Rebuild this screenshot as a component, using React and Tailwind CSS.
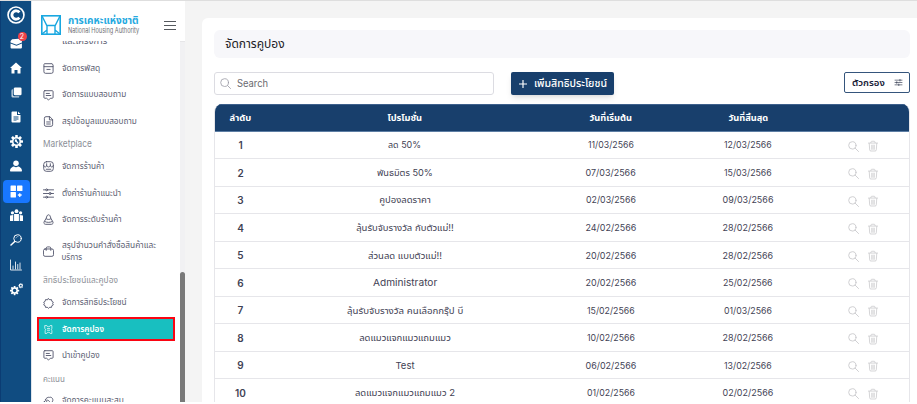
import { useLayoutEffect, useRef } from "react";

// Keeps a label at a fixed width whichever fallback font is in use.
function Fit({ w, className = "", center = false, children }) {
  const ref = useRef(null);
  useLayoutEffect(() => {
    const apply = () => {
      const el = ref.current;
      if (el) el.style.transform = `scaleX(${w / el.offsetWidth})`;
    };
    apply();
    document.fonts.ready.then(apply);
  }, [w]);
  return (
    <span style={{ width: w }} className={"flex shrink-0 " + (center ? "justify-center" : "justify-start")}>
      <span ref={ref} className={"inline-block shrink-0 whitespace-nowrap " + (center ? "origin-center " : "origin-left ") + className}>
        {children}
      </span>
    </span>
  );
}

function Line({ children, className = "size-[11px]", sw = 1.9 }) {
  return (
    <svg viewBox="0 0 24 24" className={"shrink-0 " + className} fill="none" stroke="currentColor" strokeWidth={sw} strokeLinecap="round" strokeLinejoin="round">
      {children}
    </svg>
  );
}
function Solid({ children, className = "size-3" }) {
  return (
    <svg viewBox="0 0 24 24" className={"shrink-0 " + className} fill="currentColor">
      {children}
    </svg>
  );
}

const Gear = ({ cx, cy, r, hole, color = "#104c81" }) => (
  <g>
    {[0, 45, 90, 135].map((a) => (
      <rect key={a} x={cx - r * 0.2} y={cy - r} width={r * 0.4} height={r * 2} rx={r * 0.08} transform={`rotate(${a} ${cx} ${cy})`} />
    ))}
    <circle cx={cx} cy={cy} r={r * 0.7} />
    <circle cx={cx} cy={cy} r={hole} fill={color} />
  </g>
);

const BoxI = () => <Line><path d="M4 1.500h16l2 3V8H2V4.500zM2 8v11a3.500 3.500 0 0 0 3.500 3.500h13A3.500 3.500 0 0 0 22 19V8M8.500 14h7" /></Line>;
const ChatI = () => <Line><path d="M4 1.500h16a2 2 0 0 1 2 2V16a2 2 0 0 1-2 2h-4l-4 4-4-4H4a2 2 0 0 1-2-2V3.500a2 2 0 0 1 2-2zM7 7.500h7M7 12h10" /></Line>;
const DocI = () => <Line><path d="M14 1.500H6.500A3.500 3.500 0 0 0 3 5v14a3.500 3.500 0 0 0 3.500 3.500h11A3.500 3.500 0 0 0 21 19V8.500zM14 1.500v7h7M8 13h8M8 17.500h8" /></Line>;
const ShopI = () => <Line><rect x="1.500" y="1.500" width="21" height="21" rx="6" /><path d="M1.500 10c1 4 6 4 6.500 0 1 4 7 4 8 0 .5 4 5.500 4 6.500 0M8 10V6M16 10V6M7 18h10" /></Line>;
const SlidersI = () => <Line><path d="M1 4h5M10 4h13M1 12h12M18 12h5M1 20h5M10 20h13" /><circle cx="8" cy="4" r="2" /><circle cx="15.500" cy="12" r="2.300" /><circle cx="8" cy="20" r="2" /></Line>;
const RankI = () => <Line><path d="M9 3.500c1-2.500 5-2.500 6 0l2.500 6.500 4 7c1.500 3-.5 5.500-3 5.500h-13c-2.500 0-4.500-2.500-3-5.500l4-7zM7 10.500c2 2 8 2 10 0M4 16.500c4 2.500 12 2.500 16 0" /></Line>;
const BagI = () => <Line><rect x="1" y="6.500" width="22" height="16" rx="3.500" /><path d="M7 9.500V5a3 3 0 0 1 3-3h4a3 3 0 0 1 3 3v4.500" /></Line>;
const BadgeI = () => <Line><path d="M12 1.500l2.800 2.300 3.700-.3.800 3.700 3.200 2L21 12l1.500 3-3.200 1.800-.8 3.700-3.700-.3L12 22.500l-2.800-2.300-3.700.3-.8-3.700L1.500 15 3 12 1.500 9.200l3.200-2 .8-3.700 3.700.3z" /></Line>;
const CouponI = () => <Line className="h-[11px] w-[9px]"><path d="M3 1.500h4.500c0 4 9 4 9 0H21V10c-2 1-2 3 0 4v8.500h-4.500c0-4-9-4-9 0H3V14c2-1 2-3 0-4zM9 9.500h6M9 14h6" /></Line>;
const ScoreI = () => <Line><path d="M5 8c2-4 6-6 9-5 5-2 9 4 7 8-1 3-4 4-4 8M3 12c3-4 9-4 11 0 1 4-2 7-6 7s-7-3-5-7zM8 12v4" /></Line>;

const rail = [
  <span className="relative flex">
    <Solid className="size-[13px]"><path d="M4 6l12-1 6 4v3l-10 4L1 12V9z" /><path d="M1 14l11 4 10-4v7a2 2 0 0 1-2 2H3a2 2 0 0 1-2-2z" /></Solid>
    <span className="absolute -top-[4px] -right-[4px] flex size-[9px] items-center justify-center rounded-full bg-[#f04248] text-[7px] leading-none text-white">2</span>
  </span>,
  <Solid><path d="M12 1L0 12h3v11h6v-7h6v7h6V12h3z" /></Solid>,
  <Solid className="size-[11px]"><rect x="6" y="1" width="17" height="17" rx="3" /><path d="M4 5v12a3 3 0 0 0 3 3h11v1a2 2 0 0 1-2 2H4a3 3 0 0 1-3-3V8a3 3 0 0 1 3-3z" opacity=".75" /></Solid>,
  <Solid><path fillRule="evenodd" d="M5 1h9v7h7v13a2 2 0 0 1-2 2H5a2 2 0 0 1-2-2V3a2 2 0 0 1 2-2zM7 11v2h10v-2zM7 15v2h10v-2zM7 19h6v-1H7z" /><path d="M16 1l5 5h-5z" /></Solid>,
  <Solid className="size-[13px]"><Gear cx={12} cy={12} r={12} hole={5.5} /><path d="M9 8.500l3-.5 1 3 3 4-1.500 1-3.500-3-2-1z" /></Solid>,
  <Solid><circle cx="12" cy="6.500" r="5.500" /><path d="M0 22c0-6 5-9 8-9 3 2 5 2 8 0 3 0 8 3 8 9l-1 1H1z" /></Solid>,
  <span className="flex h-[23px] w-[27px] items-center justify-center rounded-[4px] bg-[#1877ff]"><Solid className="size-[13px]"><rect x="1" y="1" width="10" height="10" rx="1" /><rect x="13" y="1" width="10" height="10" rx="1" /><rect x="1" y="13" width="10" height="10" rx="1" /><path d="M16.800 15h2.400v2.300h2.300v2.400h-2.300V22h-2.400v-2.300h-2.300v-2.400h2.300z" /></Solid></span>,
  <Solid className="size-[13px]"><circle cx="12" cy="4" r="3.500" /><circle cx="4.500" cy="7" r="3" /><circle cx="19.500" cy="7" r="3" /><path d="M7.500 9h9v13h-9zM0 12l6-1v11H0zM18 11l6 1v10h-6z" /></Solid>,
  <Line className="size-3" sw={2}><circle cx="15" cy="9" r="7.500" /><path d="M9.500 15L2 22" strokeWidth="3" /><path d="M12 8c1-2 2-3 4-3" strokeWidth="1" /></Line>,
  <Line className="size-3" sw={1.700}><path d="M1 2v20h22M6 20v-6M11 20V6M15.500 20v-9M20 20V8" /></Line>,
  <Solid className="size-[13px]"><Gear cx={8.5} cy={14} r={8.5} hole={3.2} /><Gear cx={20} cy={5} r={4.5} hole={1.6} /></Solid>,
];

const nav = [
  { i: <BoxI />, t: "จัดการพัสดุ", w: 38 },
  { i: <ChatI />, t: "จัดการแบบสอบถาม", w: 64 },
  { i: <DocI />, t: "สรุปข้อมูลแบบสอบถาม", w: 75 },
  { s: "Marketplace", w: 49 },
  { i: <ShopI />, t: "จัดการร้านค้า", w: 42 },
  { i: <SlidersI />, t: "ตั้งค่าร้านค้าแนะนำ", w: 59 },
  { i: <RankI />, t: "จัดการระดับร้านค้า", w: 60 },
  { i: <BagI />, t: "สรุปจำนวนคำสั่งซื้อสินค้าและ", w: 94, t2: "บริการ", w2: 21 },
  { s: "สิทธิประโยชน์และคูปอง", w: 75 },
  { i: <BadgeI />, t: "จัดการสิทธิประโยชน์", w: 65 },
  { i: <CouponI />, t: "จัดการคูปอง", w: 42, on: true },
  { i: <ChatI />, t: "นำเข้าคูปอง", w: 38 },
  { s: "คะแนน", w: 22 },
  { i: <ScoreI />, t: "จัดการคะแนนสะสม", w: 62 },
];

const rows = [
  ["ลด 50%", 33, "11/03/2566", "12/03/2566", 46, 48],
  ["พันธมิตร 50%", 56, "07/03/2566", "15/03/2566", 50, 48],
  ["คูปองลดราคา", 52, "02/03/2566", "09/03/2566", 50, 51],
  ["ลุ้นรับจับรางวัล กับตัวแม่!!", 98, "24/02/2566", "28/02/2566", 51, 51],
  ["ส่วนลด แบบตัวแม่!!", 74, "20/02/2566", "28/02/2566", 51, 51],
  ["Administrator", 64, "20/02/2566", "25/02/2566", 51, 50],
  ["ลุ้นรับจับรางวัล คนเลือกกรุ๊ป บี", 116, "15/02/2566", "01/03/2566", 48, 48],
  ["ลดแมวแจกแมวแถมแมว", 92, "10/02/2566", "28/02/2566", 48, 51],
  ["Test", 19, "06/02/2566", "13/02/2566", 51, 48],
  ["ลดแมวแจกแมวแถมแมว 2", 100, "01/02/2566", "02/02/2566", 48, 51],
];

const cols = "grid grid-cols-[53px_276px_135px_140px_1fr] items-center";

function NavItem({ item }) {
  if (item.s)
    return (
      <div className={"flex h-[19px] shrink-0 items-center pl-[11px] text-[#8c8f97] " + (item.s === "Marketplace" ? "text-[9.500px]" : "text-[8px]")}>
        <Fit w={item.w}>{item.s}</Fit>
      </div>
    );
  return (
    <div className={"flex shrink-0 items-center text-[8px] " + (item.t2 ? "h-[38px] " : item.on ? "my-[1.200px] h-6 " : "h-[26.400px] ") + (item.on ? "ml-[5px] mr-[5px] gap-[9px] border-2 border-[#fb0512] bg-[#18bfc0] pl-[5px] font-semibold text-white" : "gap-[7.500px] pl-[11px] text-[#5c6072]")}>
      <span className={"flex " + (item.on ? "" : "text-[#4a4d66]")}>{item.i}</span>
      <span className="flex flex-col leading-[11.500px]">
        <Fit w={item.w}>{item.t}</Fit>
        {item.t2 && <Fit w={item.w2}>{item.t2}</Fit>}
      </span>
    </div>
  );
}

export default function App() {
  return (
    <div className="h-[404px] w-[917px] overflow-hidden bg-white font-['Inter','Noto_Sans_Thai','Noto_Sans',sans-serif]">
      <div className="flex h-[402px] border-t border-[#dedede] bg-[#f4f4f4]">
        <aside className="flex w-8 shrink-0 flex-col items-center border-r border-l border-r-[#dfe5ec] border-l-[#0b3c73] bg-[#104c81] text-white">
          <div className="flex h-[29.600px] shrink-0 items-center pb-[2px]">
            <Line className="size-[18px]" sw={2.200}><circle cx="12" cy="12" r="10.600" /><path d="M16.500 8.500a5.600 5.600 0 1 0 0 7" strokeWidth="3.800" strokeLinecap="butt" /></Line>
          </div>
          {rail.map((r, i) => (
            <div key={i} className="flex h-[24.700px] shrink-0 items-center justify-center">{r}</div>
          ))}
        </aside>

        <nav className="flex w-[153px] shrink-0 flex-col bg-white">
          <header className="flex h-10 shrink-0 items-center pl-[9px] pt-[7px]">
            <svg viewBox="0 0 20 20" className="size-5 shrink-0" fill="none" stroke="#19a7e0" strokeWidth="1.600">
              <rect x=".8" y=".8" width="18.400" height="18.400" />
              <path d="M1 1l5 10v8M19 1l-5 10v8M6 10.500h8M1 19l5-4M19 19l-5-4" strokeWidth="1.400" />
            </svg>
            <span className="ml-[7px] flex flex-col">
              <Fit w={71} className="text-[11px] leading-[12px] font-bold text-[#25a9e0]">การเคหะแห่งชาติ</Fit>
              <Fit w={71} className="text-[7.500px] leading-[9px] text-[#6d6e71]">National Housing Authority</Fit>
            </span>
            <span className="ml-[25px] flex flex-col gap-[3px] pt-px">
              <i className="h-px w-3 bg-[#55595e]" /><i className="h-px w-3 bg-[#55595e]" /><i className="h-px w-3 bg-[#55595e]" />
            </span>
          </header>
          <div className="flex min-h-0 flex-1">
            <div className="flex w-[148px] flex-col overflow-hidden">
              <div className="-mt-[5px] flex h-[19.500px] shrink-0 items-start pl-[29.500px] text-[8px] leading-[11px] text-[#5c6072]">
                <Fit w={45}>และโครงการ</Fit>
              </div>
              {nav.map((n, i) => <NavItem key={i} item={n} />)}
            </div>
            <div className="w-[5px] border-t border-[#e6e6e8] bg-[#f1f1f3] pt-[230px]">
              <div className="h-[130px] rounded-t-sm bg-[#797979]" />
            </div>
          </div>
        </nav>

        <main className="ml-[17px] mt-[17px] flex flex-1 flex-col overflow-hidden rounded-tl-md bg-white pl-3 pr-[7px] pt-3">
          <h1 className="flex h-[28px] shrink-0 items-center rounded-md bg-[#f7f7fa] pl-[11px] text-[12px] text-[#212125]">
            <Fit w={60}>จัดการคูปอง</Fit>
          </h1>
          <div className="mt-[14px] flex h-[23px] shrink-0">
            <div className="flex w-[280px] items-center gap-[6px] rounded-[3px] border border-[#dcdce2] pl-[5px] text-[10px] text-[#6a6a6e]">
              <Line className="size-[11px] text-[#9c9ca6]" sw={1.800}><circle cx="10" cy="10" r="8.500" /><path d="M16.500 16.500L23 23" /></Line>
              <Fit w={31} className="-mt-px">Search</Fit>
            </div>
            <button className="ml-[17px] flex w-[103px] items-center gap-[7px] rounded-[2px] bg-[#183f6c] pl-2 text-[10px] text-white shadow-md">
              <Line className="size-2" sw={3.500}><path d="M12 1v22M1 12h22" /></Line>
              <Fit w={73} className="font-medium">เพิ่มสิทธิประโยชน์</Fit>
            </button>
            <button className="ml-auto flex h-[21px] w-[66px] items-center gap-[9px] rounded-[2px] border border-[#35557c] pl-[7px] text-[9px] text-[#182138]">
              <Fit w={33} className="font-semibold">ตัวกรอง</Fit>
              <Line className="h-[7px] w-[9px]" sw={2}><path d="M0 4h24M0 12h24M0 20h24M17 1v6M6 9v6M13 17v6" /></Line>
            </button>
          </div>

          <section className="mt-[9px] flex min-h-0 flex-1 flex-col overflow-hidden rounded-t-lg border-x border-[#e6e6ea]">
            <div className={cols + " -mx-px h-[27.500px] shrink-0 border-y border-[#5d7ea4] border-t-[#3d608c] bg-[#183f6c] text-[9px] font-bold text-white"}>
              <div className="flex justify-center"><Fit w={22} center>ลำดับ</Fit></div>
              <div className="flex justify-center"><Fit w={35} center>โปรโมชั่น</Fit></div>
              <div className="flex justify-center"><Fit w={42} center>วันที่เริ่มต้น</Fit></div>
              <div className="flex justify-center"><Fit w={40} center>วันที่สิ้นสุด</Fit></div>
            </div>
            {rows.map(([name, w, from, to, wf, wt], i) => (
              <div key={i} className={cols + " -ml-px h-[27.550px] shrink-0 border-b border-[#e6e6ea] pt-[1.500px] text-[9.500px] text-[#3f4254]"}>
                <div className="text-center text-[10px] font-semibold">{i + 1}</div>
                <div className="flex justify-center"><Fit w={w} center>{name}</Fit></div>
                <div className="flex justify-center"><Fit w={wf} center>{from}</Fit></div>
                <div className="flex justify-center"><Fit w={wt} center>{to}</Fit></div>
                <div className="flex items-center gap-[9px] pl-[30px] pt-px text-[#c6c6c9]">
                  <Line sw={1.800}><circle cx="9.500" cy="9.500" r="8" /><path d="M15.500 15.500L23 23" /></Line>
                  <Line className="h-3 w-[10px]" sw={1.800}><path d="M1 5h22M7 4V2c0-2 10-2 10 0v2M3 6l1 15c0 2 1 3 3 3h10c2 0 3-1 3-3l1-15M9 10v10M12 10v10M15 10v10" /></Line>
                </div>
              </div>
            ))}
          </section>
        </main>
      </div>
    </div>
  );
}
